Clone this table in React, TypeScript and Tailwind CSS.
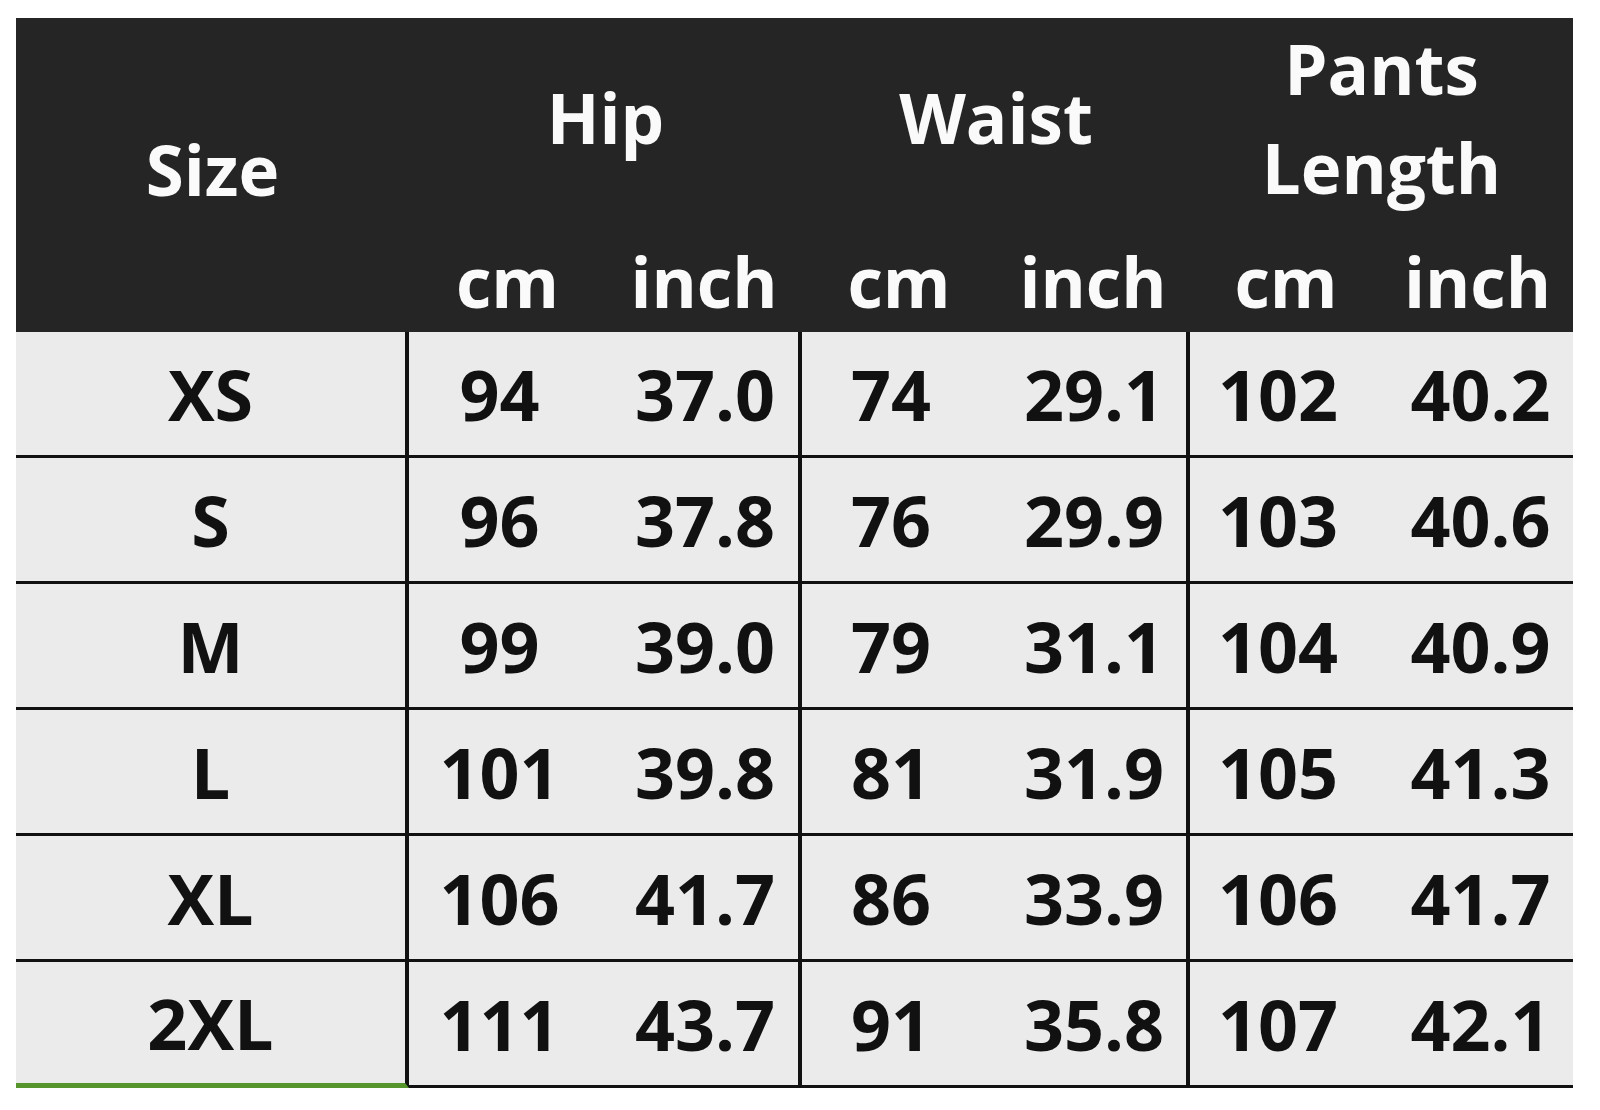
import React from "react";

const rows = [
  ["XS", "94", "37.0", "74", "29.1", "102", "40.2"],
  ["S", "96", "37.8", "76", "29.9", "103", "40.6"],
  ["M", "99", "39.0", "79", "31.1", "104", "40.9"],
  ["L", "101", "39.8", "81", "31.9", "105", "41.3"],
  ["XL", "106", "41.7", "86", "33.9", "106", "41.7"],
  ["2XL", "111", "43.7", "91", "35.8", "107", "42.1"],
];

const cols = "grid grid-cols-[393px_197px_196px_194px_194px_192px_191px]";

export default function App() {
  return (
    <div className="w-[1600px] h-[1110px] bg-white pt-[18px] pl-[16px] font-['Open_Sans',sans-serif] font-bold">
      <div className="w-[1557px]">
        {/* header */}
        <div className={`${cols} grid-rows-[205px_109px] bg-[#252525] text-[#fafafa] text-[69px] leading-none`}>
          <div className="row-span-2 flex items-center justify-center pb-[12px]">Size</div>
          <div className="col-span-2 flex items-center justify-center pb-[6px]">Hip</div>
          <div className="col-span-2 flex items-center justify-center pb-[6px]">Waist</div>
          <div className="col-span-2 flex flex-col items-center justify-center leading-[99px] pb-[6px]">
            <span>Pants</span>
            <span>Length</span>
          </div>
          {["cm", "inch", "cm", "inch", "cm", "inch"].map((u, i) => (
            <div key={i} className="flex items-center justify-center pt-[8px]">
              {u}
            </div>
          ))}
        </div>
        {/* body */}
        <div className="bg-[#ebebeb] text-[#111] text-[70px] leading-none">
          {rows.map((r, ri) => (
            <div key={ri} className={`${cols} h-[126px]`}>
              {r.map((v, ci) => (
                <div
                  key={ci}
                  className={`flex items-center justify-center border-b-[3px] ${
                    ri === rows.length - 1 && ci === 0 ? "border-[#55952b] border-b-[5px]" : "border-[#111]"
                  } ${ci === 0 || ci === 2 || ci === 4 ? "border-r-[4px] border-r-[#111]" : ""} ${
                    ci === 0 ? "" : ci % 2 === 1 ? "pr-[16px]" : "pl-[6px]"
                  }`}
                >
                  {v}
                </div>
              ))}
            </div>
          ))}
        </div>
      </div>
    </div>
  );
}
